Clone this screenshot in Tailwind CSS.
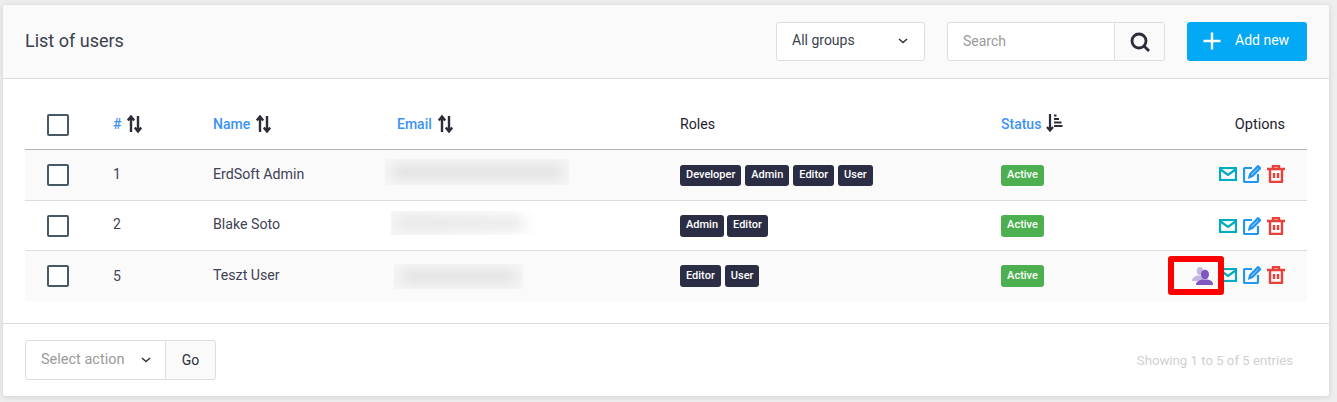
<!DOCTYPE html>
<html lang="en">
<head>
  <meta charset="UTF-8" />
  <title>List of users</title>
  <script src="https://cdn.jsdelivr.net/npm/@tailwindcss/browser@4"></script>
</head>
<body class="bg-[#eeeeee] h-[402px] overflow-hidden pt-[5px] pl-[3px] font-['Roboto',sans-serif] text-[14px] text-[#3f4254]">
  <div class="w-[1326px] h-[391px] bg-white rounded-[3px] shadow-[0_1px_6px_rgba(0,0,0,0.12)] flex flex-col">

    <!-- Header -->
    <div class="h-[74px] shrink-0 bg-[#fafafa] border-b border-[#dddddd] rounded-t-[3px] flex items-center pl-[22px] pr-[22px]">
      <h1 class="text-[18px] text-[#3b3f4c] font-normal pb-[2px]">List of users</h1>
      <div class="ml-auto w-[149px] h-[39px] bg-white border border-[#dddddd] rounded-[3px] flex items-center pl-[15px] pr-[16px] pb-[2px] text-[#3b3f4c]">
        All groups
        <svg class="ml-auto" width="10" height="6" viewBox="0 0 10 6" fill="none" stroke="#333" stroke-width="1.5"><path d="M1 1l4 3.6L9 1"/></svg>
      </div>
      <div class="ml-[22px] w-[218px] h-[39px] bg-white border border-[#dddddd] rounded-[3px] flex items-center">
        <span class="pl-[15px] text-[#9a9a9a] flex-1">Search</span>
        <span class="w-[50px] h-full bg-[#fafafa] border-l border-[#dddddd] rounded-r-[3px] flex items-center justify-center">
          <svg width="20" height="20" viewBox="0 0 20 20" fill="none" stroke="#2b2e38" stroke-width="2.8"><circle cx="9" cy="9" r="7"/><path d="M14 14L19 19"/></svg>
        </span>
      </div>
      <div class="ml-[22px] w-[120px] h-[39px] bg-[#03a9f4] rounded-[3px] flex items-center pl-[16px] pb-[2px] text-white">
        <svg width="18" height="18" viewBox="0 0 18 18" stroke="#fff" stroke-width="2.4"><path d="M9 .5v17M.5 9h17"/></svg>
        <span class="ml-[14px]">Add new</span>
      </div>
    </div>

    <!-- Table -->
    <div class="mx-[22px] mt-[21px]">
      <div class="grid grid-cols-[88px_100px_184px_283px_321px_120px_1fr] h-[50px] items-center border-b border-[#b5b5b5]">
        <span class="pl-[22px] flex"><span class="size-[22px] border-2 border-[#455a64] rounded-[2px] bg-white"></span></span>
        <span class="flex items-center gap-[6px] text-[#3b93f3] font-medium">#
          <svg class="-mt-[1px]" width="15" height="18" viewBox="0 0 15 18" fill="none" stroke="#2b2e38" stroke-width="2.4"><path d="M4 17V2M.8 5.500L4 1.500l3.200 4M11 1v15M7.800 12.500L11 16.500l3.200-4"/></svg>
        </span>
        <span class="flex items-center gap-[6px] text-[#3b93f3] font-medium">Name
          <svg class="-mt-[1px]" width="15" height="18" viewBox="0 0 15 18" fill="none" stroke="#2b2e38" stroke-width="2.4"><path d="M4 17V2M.8 5.500L4 1.500l3.200 4M11 1v15M7.800 12.500L11 16.500l3.200-4"/></svg>
        </span>
        <span class="flex items-center gap-[6px] text-[#3b93f3] font-medium">Email
          <svg class="-mt-[1px]" width="15" height="18" viewBox="0 0 15 18" fill="none" stroke="#2b2e38" stroke-width="2.4"><path d="M4 17V2M.8 5.500L4 1.500l3.200 4M11 1v15M7.800 12.500L11 16.500l3.200-4"/></svg>
        </span>
        <span class="text-[#1f2230] text-[14.2px]">Roles</span>
        <span class="flex items-center gap-[5px] text-[#3b93f3] font-medium">Status
          <svg class="-mt-[3px]" width="17" height="18" viewBox="0 0 17 18" fill="none" stroke="#2b2e38"><path stroke-width="2.2" d="M4 0v16M1 13l3 3.500 3-3.500"/><path stroke-width="1.8" d="M8 1.500h2.500M8 5h5M8 8.500h7.500M8 12h8.500"/></svg>
        </span>
        <span class="text-right pr-[22px] text-[#1f2230] text-[14.5px]">Options</span>
      </div>

      <!-- Row 1 -->
      <div class="grid grid-cols-[88px_100px_184px_283px_321px_120px_1fr] h-[51px] items-center bg-[#fafafa] border-b border-[#dddddd]">
        <span class="pl-[22px] flex"><span class="size-[22px] border-2 border-[#455a64] rounded-[2px] bg-white"></span></span>
        <span class="pb-[1px]">1</span>
        <span class="pb-[1px] text-[14.2px]">ErdSoft Admin</span>
        <span class="-ml-[12px] mb-[6px] w-[184px] h-[26px] overflow-hidden bg-[#f6f6f6] p-[7px]"><span class="block w-full h-full bg-[#dcdcdc] blur-[7px]"></span></span>
        <span class="flex gap-[4px]">
          <span class="h-[21px] px-[6px] bg-[#2a2d43] rounded-[3px] text-white text-[11px] font-medium flex items-center">Developer</span>
          <span class="h-[21px] px-[6px] bg-[#2a2d43] rounded-[3px] text-white text-[11px] font-medium flex items-center">Admin</span>
          <span class="h-[21px] px-[6px] bg-[#2a2d43] rounded-[3px] text-white text-[11px] font-medium flex items-center">Editor</span>
          <span class="h-[21px] px-[6px] bg-[#2a2d43] rounded-[3px] text-white text-[11px] font-medium flex items-center">User</span>
        </span>
        <span class="w-[43px] h-[21px] bg-[#4caf50] rounded-[3px] text-white text-[11px] font-medium flex items-center justify-center">Active</span>
        <span class="flex justify-end items-center gap-[6px] pr-[22px] pb-[2px] col-start-7">
          <svg width="18" height="14" viewBox="0 0 18 14" fill="none" stroke="#00acc1" stroke-width="2.200"><rect x="1" y="1" width="16" height="12"/><path d="M1.500 2.500L9 8l7.500-5.500"/></svg>
          <svg width="18" height="18" viewBox="0 0 18 18" fill="none" stroke="#2196f3" stroke-width="2.200"><path d="M9 3H2a1 1 0 0 0-1 1v12a1 1 0 0 0 1 1h12a1 1 0 0 0 1-1V9"/><path stroke-width="2.400" d="M6.500 12l.8-3L15 1.300l2 2L9.300 11z"/></svg>
          <svg width="18" height="18" viewBox="0 0 18 18" fill="none" stroke="#e8403a" stroke-width="2.400"><path d="M0 4h18M6 4V1h6v3M3 4v12.500a.5.500 0 0 0 .5.500h11a.5.500 0 0 0 .5-.5V4M7 8v5M11 8v5"/></svg>
        </span>
      </div>

      <!-- Row 2 -->
      <div class="grid grid-cols-[88px_100px_184px_283px_321px_120px_1fr] h-[50px] items-center border-b border-[#dddddd]">
        <span class="pl-[22px] flex"><span class="size-[22px] border-2 border-[#455a64] rounded-[2px] bg-white"></span></span>
        <span class="pb-[2px]">2</span>
        <span class="pb-[2px] text-[14.2px]">Blake Soto</span>
        <span class="-ml-[6px] mb-[5px] w-[144px] h-[24px] overflow-hidden bg-gradient-to-r from-[#f6f6f6] to-white p-[7px]"><span class="block w-[96%] h-full bg-[#e0e0e0] blur-[7px]"></span></span>
        <span class="flex gap-[3px]">
          <span class="h-[22px] px-[6px] bg-[#2a2d43] rounded-[3px] text-white text-[11px] font-medium flex items-center">Admin</span>
          <span class="h-[22px] px-[6px] bg-[#2a2d43] rounded-[3px] text-white text-[11px] font-medium flex items-center">Editor</span>
        </span>
        <span class="w-[43px] h-[22px] bg-[#4caf50] rounded-[3px] text-white text-[11px] font-medium flex items-center justify-center">Active</span>
        <span class="flex justify-end items-center gap-[6px] pr-[22px] col-start-7">
          <svg width="18" height="14" viewBox="0 0 18 14" fill="none" stroke="#00acc1" stroke-width="2.200"><rect x="1" y="1" width="16" height="12"/><path d="M1.500 2.500L9 8l7.500-5.500"/></svg>
          <svg width="18" height="18" viewBox="0 0 18 18" fill="none" stroke="#2196f3" stroke-width="2.200"><path d="M9 3H2a1 1 0 0 0-1 1v12a1 1 0 0 0 1 1h12a1 1 0 0 0 1-1V9"/><path stroke-width="2.400" d="M6.500 12l.8-3L15 1.300l2 2L9.300 11z"/></svg>
          <svg width="18" height="18" viewBox="0 0 18 18" fill="none" stroke="#e8403a" stroke-width="2.400"><path d="M0 4h18M6 4V1h6v3M3 4v12.500a.5.500 0 0 0 .5.500h11a.5.500 0 0 0 .5-.5V4M7 8v5M11 8v5"/></svg>
        </span>
      </div>

      <!-- Row 3 -->
      <div class="relative grid grid-cols-[88px_100px_184px_283px_321px_120px_1fr] h-[50px] items-center bg-[#fafafa]">
        <span class="pl-[22px] flex"><span class="size-[22px] border-2 border-[#455a64] rounded-[2px] bg-white"></span></span>
        <span>5</span>
        <span class="text-[14.2px]">Teszt User</span>
        <span class="-ml-[3px] w-[129px] h-[25px] overflow-hidden bg-[#f6f6f6] p-[7px]"><span class="block w-full h-full bg-[#dcdcdc] blur-[7px]"></span></span>
        <span class="flex gap-[4px]">
          <span class="h-[22px] px-[6px] bg-[#2a2d43] rounded-[3px] text-white text-[11px] font-medium flex items-center">Editor</span>
          <span class="h-[22px] px-[6px] bg-[#2a2d43] rounded-[3px] text-white text-[11px] font-medium flex items-center">User</span>
        </span>
        <span class="w-[43px] h-[22px] bg-[#4caf50] rounded-[3px] text-white text-[11px] font-medium flex items-center justify-center">Active</span>
        <span class="flex justify-end items-center gap-[6px] pr-[22px] pb-[2px] col-start-7">
          <svg width="18" height="14" viewBox="0 0 18 14" fill="none" stroke="#00acc1" stroke-width="2.200"><rect x="1" y="1" width="16" height="12"/><path d="M1.500 2.500L9 8l7.500-5.500"/></svg>
          <svg width="18" height="18" viewBox="0 0 18 18" fill="none" stroke="#2196f3" stroke-width="2.200"><path d="M9 3H2a1 1 0 0 0-1 1v12a1 1 0 0 0 1 1h12a1 1 0 0 0 1-1V9"/><path stroke-width="2.400" d="M6.500 12l.8-3L15 1.300l2 2L9.300 11z"/></svg>
          <svg width="18" height="18" viewBox="0 0 18 18" fill="none" stroke="#e8403a" stroke-width="2.400"><path d="M0 4h18M6 4V1h6v3M3 4v12.500a.5.500 0 0 0 .5.500h11a.5.500 0 0 0 .5-.5V4M7 8v5M11 8v5"/></svg>
        </span>
        <!-- red highlight drawn over the row -->
        <div class="absolute right-[83px] top-[5px] w-[56px] h-[39px] border-[6px] border-[#ff0000] rounded-[3px] flex justify-end items-center pr-[5px]">
          <svg width="21" height="18" viewBox="0 0 21 18">
            <g fill="#c3b5e0"><ellipse cx="8" cy="4" rx="3.200" ry="4"/><path d="M0 14c0-3.500 3-5 6-5.500h5V14z"/></g>
            <g fill="#7e57c2"><ellipse cx="13" cy="7.500" rx="4" ry="4.800"/><path d="M4 18c0-3.500 3-4.500 6-5.500h6c3 1 5 2 5 5.500z"/></g>
          </svg>
        </div>
      </div>
    </div>

    <!-- Footer -->
    <div class="mt-[22px] border-t border-[#dddddd] flex-1 flex items-center pl-[22px] pr-[36px]">
      <div class="w-[141px] h-[40px] border border-[#dddddd] rounded-l-[3px] flex items-center pl-[15px] pr-[14px] text-[14.5px] text-[#9a9a9a]">
        Select action
        <svg class="ml-auto" width="10" height="6" viewBox="0 0 10 6" fill="none" stroke="#333" stroke-width="1.5"><path d="M1 1l4 3.6L9 1"/></svg>
      </div>
      <div class="-ml-px w-[51px] h-[40px] bg-[#fafafa] border border-[#dddddd] rounded-r-[3px] flex items-center justify-center text-[#2b2e38]">Go</div>
      <span class="ml-auto mt-[1px] text-[13.2px] text-[#d0d0d0]">Showing 1 to 5 of 5 entries</span>
    </div>
  </div>
</body>
</html>
